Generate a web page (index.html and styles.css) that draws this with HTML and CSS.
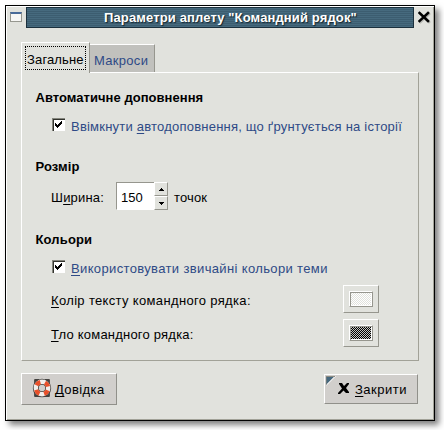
FILE: index.html
```html
<!DOCTYPE html>
<html lang="uk">
<head>
<meta charset="utf-8">
<title>Параметри аплету "Командний рядок"</title>
<link rel="stylesheet" href="styles.css">
</head>
<body>
<div class="window">
  <header class="titlebar">
    <span class="menu-slot"><i class="window-menu"></i></span>
    <h1 class="title"><span class="t-title">Параметри аплету "Командний рядок"</span></h1>
    <svg class="close" width="12" height="12" viewBox="0 0 12 12"><path d="M1.500 2l8.500 8M10 2l-8.500 8" fill="none" stroke="#000" stroke-width="2.500" stroke-linecap="square"/></svg>
  </header>
  <nav class="tabs">
    <div class="tab active"><span class="focus"><span class="t-general">Загальне</span></span></div>
    <div class="tab"><span class="t-macros">Макроси</span></div>
  </nav>
  <main class="panel">
    <h2 class="row auto"><span class="t-auto">Автоматичне доповнення</span></h2>
    <label class="row option enable"><svg class="check" viewBox="0 0 13 13" shape-rendering="crispEdges"><path d="M3 5h1v1h1v1h1v-1h1v-1h1v-1h1v-1h1v3h-1v1h-1v1h-1v1h-1v1h-1v-1h-1v-1h-1z"/></svg><span class="t-enable">Ввімкнути <u>а</u>втодоповнення, що ґрунтується на історії</span></label>
    <h2 class="row size"><span class="t-size">Розмір</span></h2>
    <div class="row width">
      <span class="width-label"><span class="t-width">Ш<u>и</u>рина:</span></span>
      <div class="spin">
        <span class="entry"><span class="t-num">150</span></span>
        <span class="steps">
          <b class="step"><svg width="5" height="3" shape-rendering="crispEdges"><path d="M2 0h1v1h1v1h1v1h-5v-1h1v-1h1z"/></svg></b>
          <b class="step"><svg width="5" height="3" shape-rendering="crispEdges"><path d="M0 0h5v1h-1v1h-1v1h-1v-1h-1v-1h-1z"/></svg></b>
        </span>
      </div>
      <span class="t-points">точок</span>
    </div>
    <h2 class="row colors"><span class="t-colors">Кольори</span></h2>
    <label class="row option theme"><svg class="check" viewBox="0 0 13 13" shape-rendering="crispEdges"><path d="M3 5h1v1h1v1h1v-1h1v-1h1v-1h1v-1h1v3h-1v1h-1v1h-1v1h-1v1h-1v-1h-1v-1h-1z"/></svg><span class="t-theme"><u>В</u>икористовувати звичайні кольори теми</span></label>
    <div class="row color fg"><span class="t-fg"><u>К</u>олір тексту командного рядка:</span><span class="picker"><i class="swatch light"></i></span></div>
    <div class="row color bg"><span class="t-bg"><u>Т</u>ло командного рядка:</span><span class="picker"><i class="swatch dark"></i></span></div>
  </main>
  <footer class="actions">
    <div class="button help">
      <svg width="20" height="20" viewBox="0 0 20 20">
        <path d="M3 6V2h4M13 2h4v4M17 14v4h-4M7 18H3v-4" fill="none" stroke="#45423f" stroke-width="1.800" stroke-linejoin="round"/>
        <circle cx="10" cy="10" r="6.200" fill="none" stroke="#454340" stroke-width="6"/>
        <circle cx="10" cy="10" r="6.200" fill="none" stroke="#f1eeeb" stroke-width="4.400"/>
        <circle cx="10" cy="10" r="6.200" fill="none" stroke="#e8502a" stroke-width="4.400" stroke-dasharray="4.870 4.870" stroke-dashoffset="-2.400"/>
      </svg>
      <span class="t-help"><u>Д</u>овідка</span>
    </div>
    <div class="button done">
      <svg class="corner" width="10" height="10" viewBox="0 0 10 10"><path d="M0 0h9L0 9z" fill="#46687d"/><path d="M9.500 0L0 9.500" stroke="#fff"/><path d="M0 9V.5h9" fill="none" stroke="#8a8a82"/></svg>
      <svg width="13" height="13" viewBox="0 0 13 13"><path d="M2 1h3l2 3 3-3h2v1L9 6l3 4v1H9L6.500 8.500 3 12H1v-1l4-4.500L2 2z"/></svg>
      <span class="t-done"><u>З</u>акрити</span>
    </div>
  </footer>
</div>
</body>
</html>
```

FILE: styles.css
```css
* { box-sizing: border-box; }
body {
  margin: 0;
  padding: 5px;
  height: 430px;
  overflow: hidden;
  background: #fff;
  color: #000;
  font: 13px/20px "Liberation Sans", Arial, sans-serif;
}
h1, h2 { margin: 0; font-size: 13px; line-height: 20px; }
h2 span { margin-left: -.5px; }
svg { display: block; flex: none; }
span { white-space: nowrap; }
u { text-underline-offset: 2px; text-decoration-thickness: 1px; text-decoration-skip-ink: none; }

.t-title { letter-spacing: .13px; }
.t-general { letter-spacing: .15px; }
.t-macros { letter-spacing: .3px; margin-left: -1px; }
.t-auto { letter-spacing: .04px; }
.t-enable { letter-spacing: .215px; }
.t-size { letter-spacing: .1px; }
.t-width { letter-spacing: .2px; }
.t-points { letter-spacing: .15px; }
.t-colors { letter-spacing: .15px; }
.t-theme { letter-spacing: .36px; }
.t-fg { letter-spacing: .34px; }
.t-bg { letter-spacing: .21px; }
.t-help { letter-spacing: .4px; }
.t-done { letter-spacing: .5px; }

.window {
  display: flex;
  flex-direction: column;
  width: 430px;
  height: 416px;
  border: 1px solid #000;
  background: #e1e2dd;
  box-shadow: inset 1px 1px #fff, inset -1px -1px #a2a298, 4px 4px 6px rgba(0, 0, 0, .5);
}

.titlebar { display: flex; height: 22px; padding-top: 1px; }
.menu-slot { width: 20px; padding: 5px 0 0 4px; }
.window-menu {
  display: block;
  width: 12px;
  height: 10px;
  border: 1px solid #96978f;
  border-top: 2px solid #496b99;
  background: #f7f7f5;
}
.title {
  width: 388px;
  height: 21px;
  padding-left: 20px;
  border: 1px solid #1b303d;
  background: repeating-linear-gradient(#466a7e 0 1px, #3c5d70 1px 2px);
  color: #fff;
  text-shadow: 1px 1px 1px #142630;
}
.title span { margin-left: 57px; }
.close { margin: 4px 0 0 4px; filter: drop-shadow(1px 1px 0 #b5b6b1); }

.tabs { display: flex; align-items: flex-end; height: 30px; margin: 14px 0 0 15px; position: relative; z-index: 1; }
.tab {
  width: 65px;
  height: 28px;
  padding: 6px 0 0 5px;
  border-top: 1px solid #fff;
  border-right: 1px solid #96968e;
  background: #c1c1bd;
  color: #2e4a86;
}
.tab.active {
  width: 69px;
  height: 31px;
  margin-bottom: -1px;
  padding: 3px 0 0 3px;
  border-left: 1px solid #fff;
  background: #e1e2dd;
  color: #000;
}
.focus { display: block; width: 61px; height: 24px; padding: 3px 0 0 1px; border: 1px dotted #000; }

.panel {
  width: 398px;
  height: 289px;
  margin-left: 15px;
  padding: 15px 0 0 14px;
  border: 1px solid;
  border-color: #fff #a2a298 #a2a298 #fff;
}
.row { display: flex; align-items: center; height: 20px; }
.option { color: #2e4a86; padding-left: 16px; }
.enable { margin-top: 9px; }
.size { margin-top: 20px; }
.width { margin-top: 11px; padding-left: 15px; }
.colors { margin-top: 22px; }
.theme { margin-top: 9px; }
.fg { margin-top: 12px; }
.bg { margin-top: 14px; }

.check {
  width: 13px;
  height: 13px;
  margin: -5px 6px 0 0;
  background: #fff;
  box-shadow: inset 1px 1px #85867e, inset 2px 2px #33342e, inset -1px -1px #fff;
}
.width-label { width: 65px; }
.spin { display: flex; width: 52px; height: 28px; margin: -4px 6px 0 0; }
.entry {
  width: 38px;
  padding: 5px 0 0 4px;
  border: 1px solid;
  border-color: #96968e transparent #fff #96968e;
  border-right: 0;
  background: #fff;
}
.steps { width: 14px; display: grid; grid-template-rows: 14px 14px; }
.step {
  display: grid;
  place-items: center;
  border: 1px solid;
  border-color: #fff #96968e #96968e #fff;
}
.color { justify-content: space-between; padding: 0 39px 0 15px; }
.picker {
  width: 36px;
  height: 28px;
  margin-top: -4px;
  padding: 5px;
  border: 1px solid;
  border-color: #fff #96968e #96968e #fff;
}
.swatch {
  display: block;
  width: 24px;
  height: 16px;
  border: 1px solid;
  border-color: #fff #96968e #96968e #fff;
  box-shadow: inset 1px 1px #96968e, inset -1px -1px #fff;
  background: repeating-conic-gradient(#fff 0 25%, #e1e2dd 0 50%) 0 0 / 2px 2px;
}
.dark { background-image: repeating-conic-gradient(#000 0 25%, #c4c5c0 0 50%); }

.actions { display: flex; justify-content: space-between; align-items: center; margin: 12px 15px 0; height: 32px; }
.button {
  display: flex;
  align-items: center;
  border: 1px solid;
  border-color: #fff #90908a #90908a #fff;
  background: #d1cfcc;
}
.help { width: 96px; height: 32px; padding-left: 10px; }
.help svg { margin: -2px 3px 0 0; }
.help span, .done span { margin-top: 2px; }
.done { position: relative; width: 94px; height: 30px; padding-left: 12px; margin-right: 1px; }
.done > svg { margin: -2px 5px 0 0; }
.done > .corner { position: absolute; left: 1px; top: 1px; margin: 0; }
```
